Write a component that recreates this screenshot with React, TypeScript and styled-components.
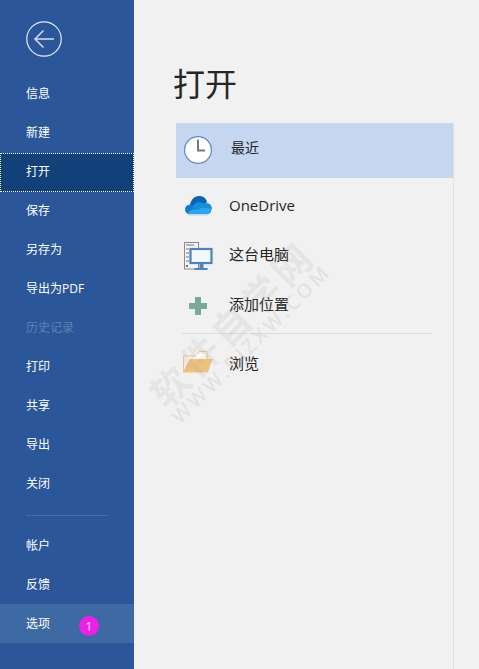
import React from "react";
import styled, { createGlobalStyle } from "styled-components";

const GlobalStyle = createGlobalStyle`
  html, body {
    margin: 0;
    padding: 0;
    background: #f1f1f1;
  }
  * {
    box-sizing: border-box;
  }
`;

const FONT = `"Open Sans", "Noto Sans CJK SC", sans-serif`;

const topItems = [
  { label: "信息" },
  { label: "新建" },
  { label: "打开", active: true },
  { label: "保存" },
  { label: "另存为" },
  { label: "导出为PDF" },
  { label: "历史记录", disabled: true },
  { label: "打印" },
  { label: "共享" },
  { label: "导出" },
  { label: "关闭" },
];

function ClockIcon() {
  return (
    <svg width="30" height="30" viewBox="0 0 30 30">
      <circle cx="15" cy="15" r="13.4" fill="#fff" stroke="#5b8cc0" strokeWidth="1.2" />
      <path d="M15 4.5V15.5H22" fill="none" stroke="#767676" strokeWidth="2" />
    </svg>
  );
}

function CloudIcon() {
  return (
    <svg width="28" height="20" viewBox="0 0 28 20">
      <path d="M6 9C7 3 11 0 15 0c4 0 7 2 8 6l-9 8z" fill="#0a63b5" />
      <path d="M4 18C0 16 0 10 4.500 9c2-.4 3 0 4 1l6 4-5 4z" fill="#0f7ccf" />
      <path d="M8 11c2-4 7-6 10-4 1 .7 3 0 5 0 3 .5 5 3 5 6l-14 3z" fill="#1590df" />
      <path d="M4 18h20c2 0 3.500-2 3.500-5-3-1-6-1-9-1-3 0-4 2-6 2-2 0-4-1-5 0-2 1-3.500 2-3.500 4z" fill="#2aa6ea" />
      <rect x="4" y="18" width="20" height="1.500" fill="#9fc9e6" opacity="0.6" />
    </svg>
  );
}

function ComputerIcon() {
  return (
    <svg width="29" height="28" viewBox="0 0 29 28">
      <rect x="0.5" y="0.5" width="14" height="26.500" fill="#f4f4f4" stroke="#8a8a8a" />
      <path d="M2 3h8M2 7h3M2 11h3M2 15h3M2 19h3" stroke="#777" strokeWidth="1" />
      <rect x="2" y="23" width="2" height="2" fill="#777" />
      <rect x="6.500" y="7" width="21" height="14" fill="#f4f8fc" stroke="#4d82bf" strokeWidth="2.200" />
      <rect x="15.500" y="22" width="4" height="4" fill="#4d82bf" />
      <rect x="10.500" y="26" width="13" height="2" fill="#4d82bf" />
    </svg>
  );
}

function PlusIcon() {
  return (
    <svg width="18" height="18" viewBox="0 0 18 18">
      <path d="M6 0H12V6H18V12H12V18H6V12H0V6H6z" fill="#77ab98" />
    </svg>
  );
}

function FolderIcon() {
  return (
    <svg width="30" height="22" viewBox="0 0 30 22">
      <path d="M.5 21V5H13L16 .5H24V8H8L.5 21z" fill="#f7f3ea" stroke="#e8c48a" />
      <path d="M9 8L15 3H23V9z" fill="#ffffff" />
      <path d="M0 21.500L7 8H29.500L25 21.500z" fill="#edc17e" />
    </svg>
  );
}

const places = [
  { label: "OneDrive", icon: <CloudIcon />, lift: 2 },
  { label: "这台电脑", icon: <ComputerIcon />, lift: 6 },
  { label: "添加位置", icon: <PlusIcon />, lift: 6 },
];

export default function App() {
  return (
    <>
      <GlobalStyle />
      <Page>
        <Sidebar>
          <BackArea>
            <BackButton aria-label="返回">
              <svg width="36" height="36" viewBox="0 0 36 36">
                <circle cx="18" cy="18" r="17.2" fill="none" stroke="#e3e9f3" strokeWidth="1.2" />
                <path d="M28 18H9M17.5 9.500L9 18l8.500 8.500" fill="none" stroke="#d5deec" strokeWidth="1.500" />
              </svg>
            </BackButton>
          </BackArea>

          {topItems.map((item) => (
            <NavItem key={item.label} $active={item.active} $disabled={item.disabled}>
              {item.label}
            </NavItem>
          ))}

          <NavDivider />

          <NavItem $low>帐户</NavItem>
          <NavItem $low>反馈</NavItem>
          <NavItem $low $hover>
            选项
            <Badge>1</Badge>
          </NavItem>
        </Sidebar>

        <Content>
          <Title>打开</Title>
          <PlaceList>
            <RecentRow>
              <IconSlot>
                <ClockIcon />
              </IconSlot>
              <RecentLabel>最近</RecentLabel>
            </RecentRow>
            <Places>
              {places.map((place) => (
                <PlaceRow key={place.label} $height={50}>
                  <IconSlot>{place.icon}</IconSlot>
                  <PlaceLabel $lift={place.lift}>{place.label}</PlaceLabel>
                </PlaceRow>
              ))}
              <PlaceDivider />
              <PlaceRow $height={56}>
                <IconSlot>
                  <FolderIcon />
                </IconSlot>
                <PlaceLabel $lift={0}>浏览</PlaceLabel>
              </PlaceRow>
            </Places>
          </PlaceList>
          <Watermark>
            <WatermarkTitle>软件自学网</WatermarkTitle>
            <WatermarkUrl>WWW.RJZXW.COM</WatermarkUrl>
          </Watermark>
        </Content>
      </Page>
    </>
  );
}

const Page = styled.div`
  width: 479px;
  height: 669px;
  display: flex;
  overflow: hidden;
  font-family: ${FONT};
  background: #f1f1f1;
`;

const Sidebar = styled.nav`
  width: 134px;
  flex: none;
  background: #2b579a;
  display: flex;
  flex-direction: column;
`;

const BackArea = styled.div`
  height: 75px;
  padding: 21px 0 0 26px;
`;

const BackButton = styled.div`
  width: 36px;
  height: 36px;
`;

const NavItem = styled.div<{ $active?: boolean; $disabled?: boolean; $hover?: boolean; $low?: boolean }>`
  position: relative;
  height: 39px;
  flex: none;
  padding: 0 0 ${(p) => (p.$low ? 2 : 3)}px 26px;
  display: flex;
  align-items: center;
  font-size: 12px;
  color: ${(p) => (p.$disabled ? "#5f80b2" : "#fff")};
  background: ${(p) => (p.$active ? "#124078" : p.$hover ? "#3e6aa3" : "transparent")};
  outline: ${(p) => (p.$active ? "1px dotted #fff" : "none")};
  outline-offset: -1px;
`;

const NavDivider = styled.div`
  height: 1px;
  flex: none;
  margin: 11px 26px 10px;
  background: #47709f;
`;

const Badge = styled.span`
  position: absolute;
  left: 79px;
  top: 12px;
  width: 20px;
  height: 20px;
  border-radius: 50%;
  background: #f01ee8;
  color: #fff;
  font-size: 12px;
  display: flex;
  align-items: center;
  justify-content: center;
`;

const Content = styled.main`
  position: relative;
  flex: 1;
  padding: 0 0 0 42px;
  display: flex;
  flex-direction: column;
`;

const Title = styled.h1`
  margin: 0 0 0 -3px;
  height: 123px;
  padding: 61px 0 0 0;
  font-size: 32px;
  line-height: 45px;
  font-weight: 400;
  color: #262626;
`;

const PlaceList = styled.div`
  flex: 1;
  width: 278px;
  border-right: 1px solid #e1e1e1;
  display: flex;
  flex-direction: column;
`;

const RecentRow = styled.div`
  height: 55px;
  flex: none;
  background: #c5d6f1;
  display: flex;
  align-items: center;
  padding-bottom: 1px;
`;

const Places = styled.div`
  padding-top: 3px;
  display: flex;
  flex-direction: column;
`;

const IconSlot = styled.div`
  width: 44px;
  margin-right: 9px;
  flex: none;
  display: flex;
  justify-content: center;
`;

const RecentLabel = styled.span`
  font-size: 14px;
  color: #262626;
  margin-left: 2px;
  margin-bottom: 7px;
`;

const PlaceRow = styled.div<{ $height: number }>`
  height: ${(p) => p.$height}px;
  flex: none;
  display: flex;
  align-items: center;
`;

const PlaceLabel = styled.span<{ $lift: number }>`
  font-size: 15px;
  color: #262626;
  margin-bottom: ${(p) => p.$lift}px;
`;

const PlaceDivider = styled.div`
  height: 1px;
  flex: none;
  margin: 2px 21px 0 6px;
  background: #dcdcdc;
`;

const Watermark = styled.div`
  position: absolute;
  left: -18px;
  top: 298px;
  width: 240px;
  display: flex;
  flex-direction: column;
  align-items: center;
  transform: rotate(-45deg);
  pointer-events: none;
  white-space: nowrap;
`;

const WatermarkTitle = styled.div`
  font-size: 38px;
  font-weight: 700;
  line-height: 50px;
  letter-spacing: 5px;
  padding-left: 5px;
  color: rgba(150, 150, 150, 0.15);
`;

const WatermarkUrl = styled.div`
  font-size: 20px;
  font-weight: 600;
  line-height: 26px;
  letter-spacing: 3px;
  margin-top: -10px;
  padding-left: 3px;
  color: rgba(150, 150, 150, 0.17);
`;
